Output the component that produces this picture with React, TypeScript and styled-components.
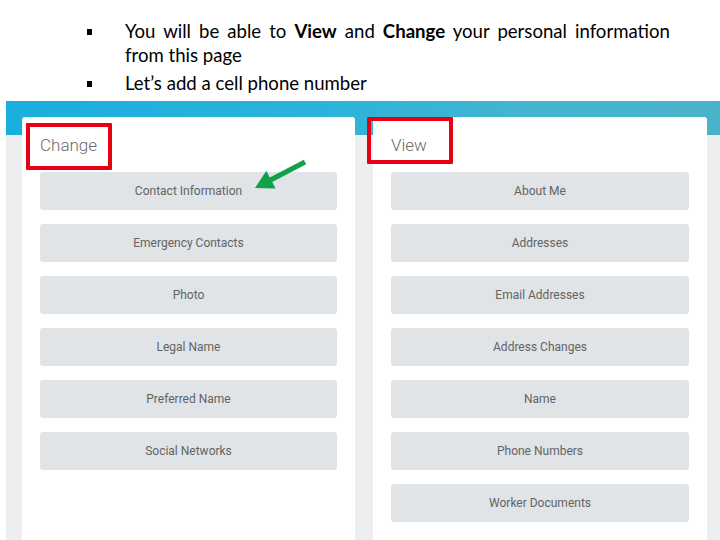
import React from "react";
import styled, { createGlobalStyle } from "styled-components";

const Global = createGlobalStyle`
  html, body { margin: 0; padding: 0; background: #ffffff; }
  body { width: 720px; height: 540px; overflow: hidden; font-family: "Lato", "Liberation Sans", sans-serif; }
  #root { width: 720px; height: 540px; }
`;

const Page = styled.div`
  width: 720px;
  height: 540px;
  display: flex;
  flex-direction: column;
  overflow: hidden;
`;

const Notes = styled.ul`
  list-style: none;
  margin: 0;
  box-sizing: border-box;
  height: 101px;
  padding: 19px 0 0 87px;
  display: flex;
  flex-direction: column;
  gap: 4px;
`;

const Note = styled.li`
  display: flex;
  align-items: flex-start;
`;

const Marker = styled.span`
  flex: 0 0 38px;
  height: 24px;
  display: flex;
  align-items: center;
  &::before {
    content: "";
    width: 5px;
    height: 6px;
    background: #000;
    margin-top: 1px;
  }
`;

const NoteText = styled.span`
  width: 545px;
  font-family: "Lato", "Liberation Sans", sans-serif;
  font-size: 18.6px;
  line-height: 24px;
  color: #000;
  text-align: justify;
  b { font-weight: 700; }
`;

const Shot = styled.div`
  flex: 1;
  margin-left: 6px;
  box-sizing: border-box;
  padding: 16px 13px 0 16px;
  background:
    linear-gradient(90deg, #1aafdd 0%, #2cb3db 45%, #45b5cf 75%, #48b3c8 100%) top left / 100% 34px no-repeat,
    #eceef0;
  display: grid;
  grid-template-columns: 333px 334px;
  column-gap: 18px;
  overflow: hidden;
`;

const Card = styled.section`
  position: relative;
  background: #ffffff;
  border-radius: 3px 3px 0 0;
  padding: 17px 18px 0;
  display: flex;
  flex-direction: column;
`;

const CardTitle = styled.h2`
  margin: 0 0 16px;
  padding-left: 0;
  font-family: "Roboto", "Liberation Sans", sans-serif;
  font-weight: 300;
  font-size: 17px;
  line-height: 22px;
  color: #6a6a6a;
`;

const Buttons = styled.div`
  display: flex;
  flex-direction: column;
  gap: 14px;
`;

const Action = styled.div`
  height: 38px;
  border-radius: 3px;
  background: #e0e4e7;
  display: flex;
  align-items: center;
  justify-content: center;
  font-family: "Roboto", "Liberation Sans", sans-serif;
  font-size: 12px;
  color: #636363;
`;

const Highlight = styled.div<{ $left: number; $top: number; $w: number; $h: number }>`
  position: absolute;
  left: ${(p) => p.$left}px;
  top: ${(p) => p.$top}px;
  width: ${(p) => p.$w}px;
  height: ${(p) => p.$h}px;
  box-sizing: border-box;
  border: 4px solid #e60012;
  border-radius: 1px;
  pointer-events: none;
`;

const Pointer = styled.svg`
  position: absolute;
  left: 225px;
  top: 40px;
  width: 65px;
  height: 36px;
  overflow: visible;
`;

const changeItems = [
  "Contact Information",
  "Emergency Contacts",
  "Photo",
  "Legal Name",
  "Preferred Name",
  "Social Networks",
];

const viewItems = [
  "About Me",
  "Addresses",
  "Email Addresses",
  "Address Changes",
  "Name",
  "Phone Numbers",
  "Worker Documents",
];

export default function App() {
  return (
    <Page>
      <Global />
      <Notes>
        <Note>
          <Marker />
          <NoteText>
            You will be able to <b>View</b> and <b>Change</b> your personal information from this page
          </NoteText>
        </Note>
        <Note>
          <Marker />
          <NoteText>Let’s add a cell phone number</NoteText>
        </Note>
      </Notes>
      <Shot>
        <Card>
          <CardTitle>Change</CardTitle>
          <Buttons>
            {changeItems.map((t) => (
              <Action key={t}>{t}</Action>
            ))}
          </Buttons>
          <Highlight $left={4} $top={6} $w={86} $h={47} />
          <Pointer viewBox="0 0 65 36">
            <polygon
              points="56.8,2.8 22.8,20.5 19.4,13.8 8,31 28.6,31.6 25.2,24.9 59.2,7.2"
              fill="#12a14b"
            />
          </Pointer>
        </Card>
        <Card>
          <CardTitle>View</CardTitle>
          <Buttons>
            {viewItems.map((t) => (
              <Action key={t}>{t}</Action>
            ))}
          </Buttons>
          <Highlight $left={-6} $top={0} $w={86} $h={47} />
        </Card>
      </Shot>
    </Page>
  );
}
